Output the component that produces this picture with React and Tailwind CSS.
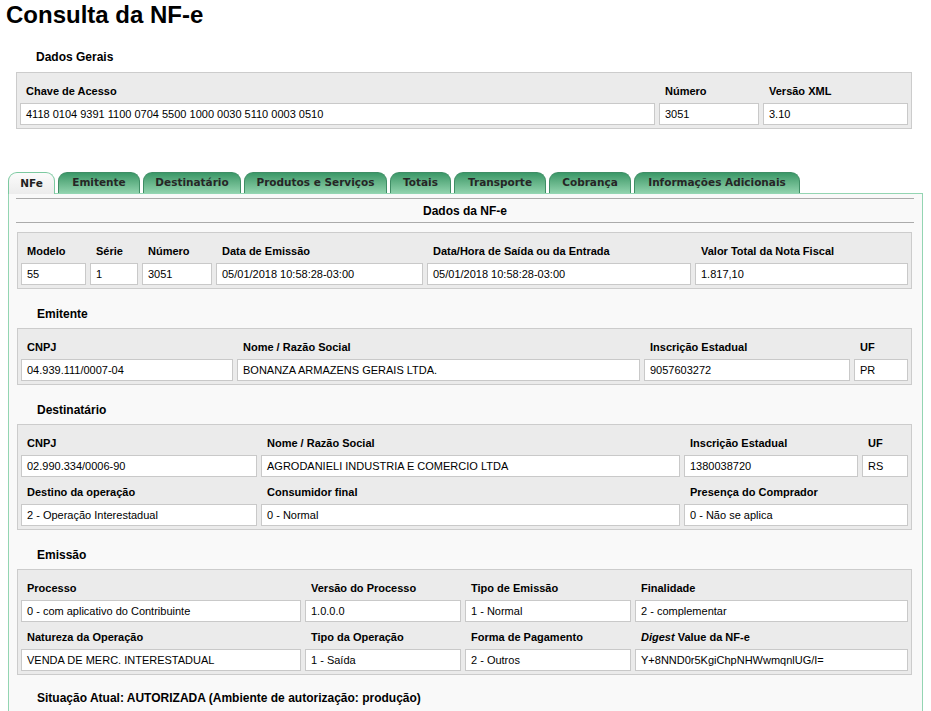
const tabs = [
    { label: 'NFe', w: 'w-[47px]', active: true },
    { label: 'Emitente', w: 'w-[82px]' },
    { label: 'Destinatário', w: 'w-[98px]' },
    { label: 'Produtos e Serviços', w: 'w-[143px]' },
    { label: 'Totais', w: 'w-[61px]' },
    { label: 'Transporte', w: 'w-[92px]' },
    { label: 'Cobrança', w: 'w-[82px]' },
    { label: 'Informações Adicionais', w: 'w-[166px]' },
];

const Field = ({ label, value, className = '' }) => (
    <div className={className}>
        <div className="h-[27px] flex items-end pb-[6px] pl-[6px] text-[11px] leading-[12px] font-bold text-black whitespace-nowrap">
            {label}
        </div>
        <div className="h-[22px] border border-[#c9c9c9] bg-white pl-[5px] flex items-center text-[11px] text-black whitespace-nowrap overflow-hidden">
            {value}
        </div>
    </div>
);

const Box = ({ cols, width, children }) => (
    <div className={`border border-[#cccccc] bg-[#ebebeb] p-[3px] grid gap-x-[4px] ${cols} ${width}`}>
        {children}
    </div>
);

const Heading = ({ children }) => (
    <div className="pt-[18px] pb-[7px] pl-[28px] text-[12px] leading-[14px] font-bold text-black">{children}</div>
);

export default function App() {
    return (
        <div className="min-h-[711px] bg-white font-['Liberation_Sans',Arial,sans-serif] text-black">
            <h1 className="pt-[1px] pl-[6px] text-[24px] leading-[28px] font-bold">Consulta da NF-e</h1>

            <div className="mt-[21px] mb-[8px] pl-[36px] text-[12px] leading-[14px] font-bold">Dados Gerais</div>
            <div className="ml-[16px]">
                <Box cols="grid-cols-[635px_100px_145px]" width="w-[896px]">
                    <Field label="Chave de Acesso" value="4118 0104 9391 1100 0704 5500 1000 0030 5110 0003 0510" />
                    <Field label="Número" value="3051" />
                    <Field label="Versão XML" value="3.10" />
                </Box>
            </div>

            <div className="mt-[43px] pl-[8px] flex gap-[3px] items-end font-['DejaVu_Sans',Verdana,sans-serif]">
                {tabs.map((tab) => (
                    <div
                        key={tab.label}
                        className={`${tab.w} h-[21px] rounded-t-[9px] border border-b-0 flex items-center justify-center text-[10.5px] font-bold whitespace-nowrap ${tab.active
                            ? 'relative z-10 border-[#7cc9a0] bg-linear-to-b from-[#fbfbfb] to-[#ececec] text-[#222] h-[22px] -mb-[1px]'
                            : 'border-[#3f8d65] bg-linear-to-b from-[#3a9868] to-[#8fd2ac] text-[#262626]'
                            }`}
                    >
                        {tab.label}
                    </div>
                ))}
            </div>

            <div className="ml-[8px] w-[915px] border border-b-0 border-[#93d5b2] bg-[#f9f9f9] pb-[20px]">
                <div className="mt-[4px] ml-[7px] w-[898px] h-[25px] border-y border-[#ababab] flex items-center justify-center text-[12px] font-bold">
                    Dados da NF-e
                </div>

                <div className="mt-[9px] ml-[8px]">
                    <Box cols="grid-cols-[65px_48px_70px_207px_264px_213px]" width="w-[895px]">
                        <Field label="Modelo" value="55" />
                        <Field label="Série" value="1" />
                        <Field label="Número" value="3051" />
                        <Field label="Data de Emissão" value="05/01/2018 10:58:28-03:00" />
                        <Field label="Data/Hora de Saída ou da Entrada" value="05/01/2018 10:58:28-03:00" />
                        <Field label="Valor Total da Nota Fiscal" value="1.817,10" />
                    </Box>
                </div>

                <Heading>Emitente</Heading>
                <div className="ml-[8px]">
                    <Box cols="grid-cols-[212px_403px_206px_54px]" width="w-[895px]">
                        <Field label="CNPJ" value="04.939.111/0007-04" />
                        <Field label="Nome / Razão Social" value="BONANZA ARMAZENS GERAIS LTDA." />
                        <Field label="Inscrição Estadual" value="9057603272" />
                        <Field label="UF" value="PR" />
                    </Box>
                </div>

                <Heading>Destinatário</Heading>
                <div className="ml-[8px]">
                    <Box cols="grid-cols-[236px_419px_174px_46px]" width="w-[895px]">
                        <Field label="CNPJ" value="02.990.334/0006-90" />
                        <Field label="Nome / Razão Social" value="AGRODANIELI INDUSTRIA E COMERCIO LTDA" />
                        <Field label="Inscrição Estadual" value="1380038720" />
                        <Field label="UF" value="RS" />
                        <Field label="Destino da operação" value="2 - Operação Interestadual" />
                        <Field label="Consumidor final" value="0 - Normal" />
                        <Field className="col-span-2" label="Presença do Comprador" value="0 - Não se aplica" />
                    </Box>
                </div>

                <Heading>Emissão</Heading>
                <div className="ml-[8px]">
                    <Box cols="grid-cols-[280px_156px_166px_273px]" width="w-[895px]">
                        <Field label="Processo" value="0 - com aplicativo do Contribuinte" />
                        <Field label="Versão do Processo" value="1.0.0.0" />
                        <Field label="Tipo de Emissão" value="1 - Normal" />
                        <Field label="Finalidade" value="2 - complementar" />
                        <Field label="Natureza da Operação" value="VENDA DE MERC. INTERESTADUAL" />
                        <Field label="Tipo da Operação" value="1 - Saída" />
                        <Field label="Forma de Pagamento" value="2 - Outros" />
                        <Field label={<span><i>Digest</i> Value da NF-e</span>} value="Y+8NND0r5KgiChpNHWwmqnlUG/I=" />
                    </Box>
                </div>

                <div className="mt-[16px] pl-[28px] text-[12px] leading-[14px] font-bold">
                    Situação Atual: AUTORIZADA (Ambiente de autorização: produção)
                </div>
            </div>
        </div>
    );
}
